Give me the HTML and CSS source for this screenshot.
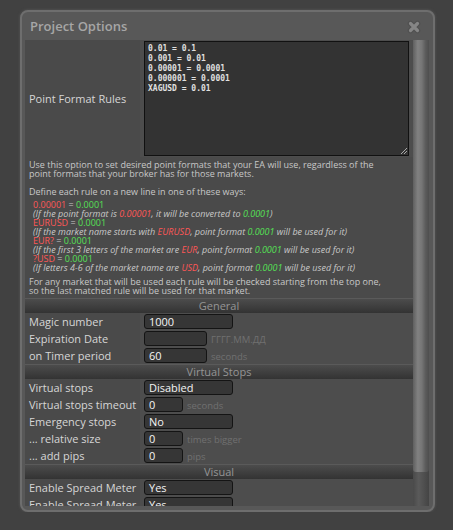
FILE: index.html
```html
<!DOCTYPE html>
<html lang="en">
<head>
    <meta charset="UTF-8">
    <title>Project Options</title>
    <link rel="stylesheet" href="styles.css">
</head>
<body>
    <div class="dialog">
        <div class="title-bar">
            <span class="title">Project Options</span>
            <svg class="close" width="14" height="14" viewBox="0 0 14 14">
                <path d="M3.5 3.5 L10.5 10.5 M10.5 3.5 L3.5 10.5" stroke="#505050" stroke-width="5.5" stroke-linecap="round"/>
                <path d="M3.5 3.5 L10.5 10.5 M10.5 3.5 L3.5 10.5" stroke="#858585" stroke-width="3.2" stroke-linecap="round"/>
            </svg>
        </div>
        <div class="dialog-body">
            <div class="content">
                <div class="row row-tall">
                    <div class="label">Point Format Rules</div>
                    <div class="value">
                        <div class="textarea">0.01 = 0.1
0.001 = 0.01
0.00001 = 0.0001
0.000001 = 0.0001
XAGUSD = 0.01<svg class="grip" width="9" height="9" viewBox="0 0 9 9"><path d="M8 2 L2 8 M8 5 L5 8" stroke="#aaa" stroke-width="1"/></svg></div>
                    </div>
                </div>

                <div class="help">
                    <p>Use this option to set desired point formats that your EA will use, regardless of the<br>point formats that your broker has for those markets.</p>
                    <p class="gap">Define each rule on a new line in one of these ways:</p>
                    <div class="rules">
                        <div><span class="red">0.00001</span> = <span class="green">0.0001</span></div>
                        <div class="note">(If the point format is <span class="red">0.00001</span>, it will be converted to <span class="green">0.0001</span>)</div>
                        <div><span class="red">EURUSD</span> = <span class="green">0.0001</span></div>
                        <div class="note">(If the market name starts with <span class="red">EURUSD</span>, point format <span class="green">0.0001</span> will be used for it)</div>
                        <div><span class="red">EUR?</span> = <span class="green">0.0001</span></div>
                        <div class="note">(If the first 3 letters of the market are <span class="red">EUR</span>, point format <span class="green">0.0001</span> will be used for it)</div>
                        <div><span class="red">?USD</span> = <span class="green">0.0001</span></div>
                        <div class="note">(If letters 4-6 of the market name are <span class="red">USD</span>, point format <span class="green">0.0001</span> will be used for it)</div>
                    </div>
                    <p class="last">For any market that will be used each rule will be checked starting from the top one,<br>so the last matched rule will be used for that market.</p>
                </div>

                <div class="section">General</div>
                <div class="row">
                    <div class="label">Magic number</div>
                    <div class="value"><div class="field wide">1000</div></div>
                </div>
                <div class="row">
                    <div class="label">Expiration Date</div>
                    <div class="value"><div class="field mid"></div><span class="hint">ГГГГ.ММ.ДД</span></div>
                </div>
                <div class="row">
                    <div class="label">on Timer period</div>
                    <div class="value"><div class="field mid">60</div><span class="hint">seconds</span></div>
                </div>

                <div class="section">Virtual Stops</div>
                <div class="row">
                    <div class="label">Virtual stops</div>
                    <div class="value"><div class="field wide">Disabled</div></div>
                </div>
                <div class="row">
                    <div class="label">Virtual stops timeout</div>
                    <div class="value"><div class="field small">0</div><span class="hint">seconds</span></div>
                </div>
                <div class="row">
                    <div class="label">Emergency stops</div>
                    <div class="value"><div class="field wide">No</div></div>
                </div>
                <div class="row">
                    <div class="label">... relative size</div>
                    <div class="value"><div class="field small">0</div><span class="hint">times bigger</span></div>
                </div>
                <div class="row">
                    <div class="label">... add pips</div>
                    <div class="value"><div class="field small">0</div><span class="hint">pips</span></div>
                </div>

                <div class="section">Visual</div>
                <div class="row">
                    <div class="label">Enable Spread Meter</div>
                    <div class="value"><div class="field wide">Yes</div></div>
                </div>
                <div class="row">
                    <div class="label">Enable Spread Meter</div>
                    <div class="value"><div class="field wide">Yes</div></div>
                </div>
            </div>
            <div class="scrollbar">
                <div class="thumb"></div>
            </div>
        </div>
    </div>
</body>
</html>
```

FILE: styles.css
```css
/* Page */
body, html {
    margin: 0;
    padding: 0;
    background-color: #414141;
    font-family: 'Open Sans', 'Noto Sans', sans-serif;
}

/* Dialog window */
.dialog {
    margin: 10px 0 0 20px;
    width: 411px;
    height: 498px;
    border: 2px solid #6e6e6e;
    border-radius: 8px;
    background-color: #585858;
    box-shadow: 0 0 3px #5a5a5a;
    display: flex;
    flex-direction: column;
}

.title-bar {
    height: 28px;
    display: flex;
    align-items: center;
    justify-content: space-between;
    padding: 0 12px 0 8px;
    flex-shrink: 0;
}

.title {
    font-size: 13px;
    font-weight: 600;
    color: #a6a6a6;
}

.close {
    margin-top: 1px;
}

.dialog-body {
    display: flex;
    margin: 0 4px 0 3px;
    height: 466px;
    overflow: hidden;
}

.content {
    flex: 1;
    background-color: #4a4a4a;
    overflow: hidden;
}

/* Scrollbar */
.scrollbar {
    width: 16px;
    flex-shrink: 0;
    background: linear-gradient(to right, #4a4a4a, #5a5a5a 35%, #505050 65%, #444444);
}

.thumb {
    height: 432px;
    border-radius: 0 0 3px 3px;
    background: linear-gradient(to right, #5f5f5f, #818181 30%, #767676 55%, #5c5c5c 78%, #4e4e4e);
}

/* Option rows */
.row {
    display: grid;
    grid-template-columns: 115px 1fr;
    height: 17px;
}

.row-tall {
    height: 117px;
}

.label {
    padding-left: 4px;
    font-size: 11px;
    color: #d6d6d6;
    display: flex;
    align-items: center;
    white-space: nowrap;
}

.value {
    background-color: #4d4d4d;
    padding-left: 4px;
    display: flex;
    align-items: center;
}

.row-tall .value {
    align-items: flex-start;
    padding-top: 1px;
}

.textarea {
    position: relative;
    box-sizing: border-box;
    width: 265px;
    height: 115px;
    border: 1px solid #111;
    background-color: #333333;
    color: #e0e0e0;
    font-family: 'DejaVu Sans Mono', monospace;
    font-weight: bold;
    font-size: 8px;
    line-height: 10px;
    padding: 2px 3px 0;
    white-space: pre;
}

.grip {
    position: absolute;
    right: 0;
    bottom: 0;
}

.field {
    box-sizing: border-box;
    height: 15px;
    border: 1px solid #141414;
    border-radius: 3px;
    background-color: #363636;
    color: #f4f4f4;
    font-size: 11px;
    line-height: 13px;
    padding-left: 4px;
}

.field.wide { width: 89px; }
.field.mid { width: 63px; }
.field.small { width: 39px; }

.hint {
    margin-left: 4px;
    font-size: 9.5px;
    color: #707070;
    margin-top: 2px;
}

/* Help text */
.help {
    padding: 3px 4px 3px 4px;
    font-size: 9px;
    line-height: 9px;
    color: #c8c8c8;
}

.help p {
    margin: 0;
}

.help .gap {
    margin-top: 9px;
}

.rules {
    margin: 4px 0 5px 4px;
}

.note {
    font-style: italic;
}

.red { color: #ff5757; }
.green { color: #55e055; }

/* Section headers */
.section {
    height: 14px;
    border-top: 1px solid #5a5a5a;
    background: linear-gradient(#4c4c4c, #333333);
    color: #959595;
    font-size: 11px;
    line-height: 14px;
    text-align: center;
}
```
